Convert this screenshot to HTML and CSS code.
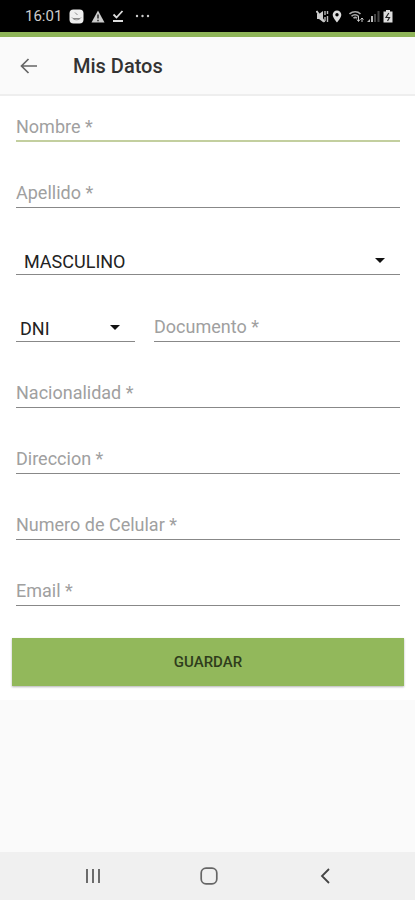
FILE: index.html
```html
<!DOCTYPE html>
<html lang="es">

<head>
    <meta charset="UTF-8" />
    <meta name="viewport" content="width=device-width, initial-scale=1.0" />
    <title>Mis Datos</title>
    <link rel="stylesheet" href="styles.css">
</head>

<body>
    <div class="status-bar">
        <div class="status-left">
            <span class="clock">16:01</span>
            <svg width="15" height="15" viewBox="0 0 15 15">
                <rect x="0.5" y="0.5" width="14" height="14" rx="4" fill="#eee" />
                <path d="M6 3.5l2.5 2.5M3 8.5c2 3 7 3 9 0M4 9.5h7" stroke="#888" fill="none" />
            </svg>
            <svg width="14" height="13" viewBox="0 0 14 13">
                <path d="M7 0.5L13.5 12.5H0.5z" fill="#ccc" />
                <path d="M7 4.5v4M7 9.8v1.4" stroke="#222" stroke-width="1.4" />
            </svg>
            <svg width="12" height="14" viewBox="0 0 12 14">
                <path d="M1.5 5.5l3 3L10.5 2M1 12h10" stroke="#ddd" stroke-width="1.8" fill="none" />
            </svg>
            <svg class="more" width="15" height="4" viewBox="0 0 15 4">
                <g fill="#ccc">
                    <circle cx="2" cy="2" r="1.2" />
                    <circle cx="7.5" cy="2" r="1.2" />
                    <circle cx="13" cy="2" r="1.2" />
                </g>
            </svg>
        </div>
        <div class="status-right">
            <svg width="13" height="13" viewBox="0 0 13 13">
                <path d="M1 4h2l4-3v11L3 9H1z" fill="#ccc" />
                <path d="M0.5 1l8 11" stroke="#ccc" stroke-width="2" />
                <path d="M9 1v4M9 7v4M11.5 1v3M11.5 6v6" stroke="#bbb" stroke-width="1.4" fill="none" />
            </svg>
            <svg width="10" height="13" viewBox="0 0 10 13">
                <path d="M5 0.5A4.3 4.3 0 0 0 0.7 4.8C0.7 8 5 12.5 5 12.5S9.3 8 9.3 4.8A4.3 4.3 0 0 0 5 0.5z" fill="#ddd" />
                <circle cx="5" cy="4.8" r="1.7" fill="#000" />
            </svg>
            <svg class="wifi" width="15" height="13" viewBox="0 0 15 13">
                <path d="M0.5 4c3.5-3 8-3 11 0M2.5 6.2c2-2 5-2 7 0M4.5 8.3c1-1 2.5-1 3.5 0" stroke="#aaa" stroke-width="1.6" fill="none" />
                <path d="M9.5 6v5M8 9.5l1.5 2 1.5-2M13 12V8M11.5 9.5L13 8l1.5 1.5" stroke="#ccc" fill="none" />
            </svg>
            <svg width="13" height="13" viewBox="0 0 13 13">
                <path d="M0 12h3V9zM4 12h2V6H4z" fill="#bbb" />
                <path d="M7 12h2V4H7zM10.5 12h2V1h-2z" fill="#444" />
            </svg>
            <svg width="10" height="13" viewBox="0 0 10 13">
                <path d="M3 0h4v1.5h2.5v11h-9v-11H3z" fill="#ddd" />
                <path d="M5.8 3L3 7.5h3.5L4.5 11" stroke="#222" stroke-width="1.2" fill="none" />
            </svg>
        </div>
    </div>

    <header class="app-bar">
        <button type="button" class="back" aria-label="Volver">
            <svg width="18" height="16" viewBox="0 0 18 16">
                <path d="M17 8H2M8.5 1L1.5 8l7 7" stroke="#666" stroke-width="1.7" fill="none" />
            </svg>
        </button>
        <h1>Mis Datos</h1>
    </header>

    <form class="form">
        <div class="fields">
            <input type="text" class="field active" placeholder="Nombre *" aria-label="Nombre" />
            <input type="text" class="field" placeholder="Apellido *" aria-label="Apellido" />
            <select class="field" aria-label="Sexo">
                <option>MASCULINO</option>
                <option>FEMENINO</option>
            </select>
            <div class="row">
                <select class="field doc-type" aria-label="Tipo de documento">
                    <option>DNI</option>
                    <option>LE</option>
                    <option>LC</option>
                </select>
                <input type="text" class="field" placeholder="Documento *" aria-label="Documento" />
            </div>
            <input type="text" class="field" placeholder="Nacionalidad *" aria-label="Nacionalidad" />
            <input type="text" class="field" placeholder="Direccion *" aria-label="Direccion" />
            <input type="tel" class="field" placeholder="Numero de Celular *" aria-label="Numero de Celular" />
            <input type="email" class="field" placeholder="Email *" aria-label="Email" />
        </div>
        <button type="submit" class="save">GUARDAR</button>
    </form>

    <nav class="nav-bar">
        <button type="button" aria-label="Recientes">
            <svg width="18" height="18" viewBox="0 0 18 18">
                <path d="M3 2v14M9 2v14M15 2v14" stroke="#555" stroke-width="1.7" />
            </svg>
        </button>
        <button type="button" aria-label="Inicio">
            <svg width="18" height="18" viewBox="0 0 18 18">
                <rect x="1.2" y="1.2" width="15.6" height="15.6" rx="4.8" stroke="#666" stroke-width="1.7" fill="none" />
            </svg>
        </button>
        <button type="button" aria-label="Atras">
            <svg width="18" height="18" viewBox="0 0 18 18">
                <path d="M13 2L6 9l7 7" stroke="#444" stroke-width="1.8" fill="none" />
            </svg>
        </button>
    </nav>
</body>

</html>
```

FILE: styles.css
```css
* {
    box-sizing: border-box;
}

body {
    margin: 0;
    min-height: 100vh;
    display: flex;
    flex-direction: column;
    font-family: Roboto, sans-serif;
    background-color: #fafafa;
}

svg {
    display: block;
}

button {
    border: none;
    padding: 0;
    font-family: inherit;
    background: none;
    cursor: pointer;
}

.status-bar {
    display: flex;
    justify-content: space-between;
    height: 37px;
    padding: 0 22px 0 25px;
    background-color: #000;
    border-bottom: 5px solid #8eb458;
}

.status-left,
.status-right {
    display: flex;
    align-items: center;
}

.status-left {
    gap: 7px;
}

.status-right {
    gap: 3px;
}

.clock {
    color: #ccc;
    font-size: 15px;
}

.more {
    margin-left: 4px;
}

.wifi {
    margin-left: 4px;
}

.app-bar {
    display: flex;
    align-items: center;
    gap: 35px;
    height: 59px;
    padding: 0 20px;
    border-bottom: 2px solid #eee;
}

.app-bar h1 {
    margin: 0;
    font-size: 20px;
    font-weight: 500;
    color: #333;
}

.form {
    padding: 16px 11px 14px 12px;
    background-color: #fff;
}

.fields {
    display: flex;
    flex-direction: column;
    gap: 36px;
    margin: 0 4px 32px;
}

.field {
    width: 100%;
    height: 30px;
    padding: 0;
    border: none;
    border-bottom: 1px solid #888;
    border-radius: 0;
    outline: none;
    background-color: transparent;
    font-family: inherit;
    font-size: 18px;
    color: #222;
}

.field::placeholder {
    color: #a0a0a0;
}

.active {
    border-bottom: 2px solid #c3cf9f;
}

select.field {
    height: 31px;
    padding: 4px 8px 0;
    appearance: none;
    background-image: url("data:image/svg+xml,%3Csvg xmlns='http://www.w3.org/2000/svg' width='10' height='5'%3E%3Cpath d='M0 0h10L5 5z' fill='%23111'/%3E%3C/svg%3E");
    background-repeat: no-repeat;
    background-position: right 15px top 14px;
}

.row {
    display: flex;
    align-items: flex-end;
    gap: 19px;
}

select.doc-type {
    flex: 0 0 31%;
    padding-left: 4px;
}

.save {
    display: block;
    width: 100%;
    height: 48px;
    background-color: #92b85b;
    box-shadow: 0 1px 2px rgba(0, 0, 0, 0.3);
    font-size: 15px;
    font-weight: 500;
    color: #2f3d1c;
}

.nav-bar {
    display: flex;
    justify-content: space-around;
    align-items: center;
    height: 48px;
    margin-top: auto;
    padding: 0 32px 0 35px;
    background-color: #f0f0f0;
}
```
